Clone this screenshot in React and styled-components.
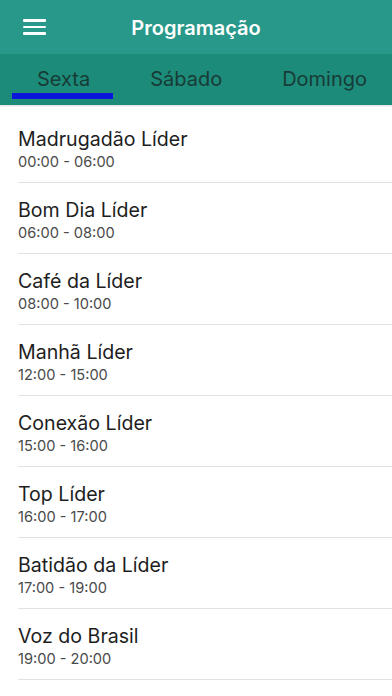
import React from "react";
import styled, { createGlobalStyle } from "styled-components";

const GlobalStyle = createGlobalStyle`
  body {
    margin: 0;
    background: #ffffff;
    font-family: Inter, "Liberation Sans", sans-serif;
  }
`;

const programs = [
  { title: "Madrugadão Líder", time: "00:00 - 06:00" },
  { title: "Bom Dia Líder", time: "06:00 - 08:00" },
  { title: "Café da Líder", time: "08:00 - 10:00" },
  { title: "Manhã Líder", time: "12:00 - 15:00" },
  { title: "Conexão Líder", time: "15:00 - 16:00" },
  { title: "Top Líder", time: "16:00 - 17:00" },
  { title: "Batidão da Líder", time: "17:00 - 19:00" },
  { title: "Voz do Brasil", time: "19:00 - 20:00" },
];

const tabs = ["Sexta", "Sábado", "Domingo"];

const App = () => {
  return (
    <Screen>
      <GlobalStyle />
      <Header>
        <MenuButton aria-label="menu">
          <span />
          <span />
          <span />
        </MenuButton>
        <Title>Programação</Title>
      </Header>
      <TabBar>
        {tabs.map((tab, i) => (
          <Tab key={tab} active={i === 0}>
            {tab}
          </Tab>
        ))}
      </TabBar>
      <List>
        {programs.map((p) => (
          <Row key={p.title}>
            <ProgramTitle>{p.title}</ProgramTitle>
            <ProgramTime>{p.time}</ProgramTime>
          </Row>
        ))}
      </List>
    </Screen>
  );
};

export default App;

// Styled Components
const Screen = styled.div`
  width: 392px;
  height: 696px;
  overflow: hidden;
  background: #fff;
`;

const Header = styled.header`
  height: 54px;
  background: #27988a;
  display: flex;
  align-items: center;
  justify-content: center;
  position: relative;
`;

const MenuButton = styled.div`
  position: absolute;
  left: 23px;
  top: 19px;
  width: 23px;
  display: flex;
  flex-direction: column;
  gap: 4px;

  span {
    display: block;
    height: 2.5px;
    background: #fff;
    border-radius: 1px;
  }
`;

const Title = styled.h1`
  margin: 0;
  color: #fff;
  font-size: 20px;
  font-weight: 600;
  padding-top: 2px;
`;

const TabBar = styled.nav`
  height: 51px;
  background: #1d8b7a;
  display: flex;
  justify-content: space-between;
  padding: 0 25px 0 37px;
  box-shadow: 0 1px 2px rgba(0, 0, 0, 0.15);
`;

const Tab = styled.div`
  position: relative;
  display: flex;
  align-items: center;
  padding-bottom: 2px;
  font-size: 20px;
  color: #17332f;
  opacity: 0.9;

  &::after {
    content: "";
    display: ${(p) => (p.active ? "block" : "none")};
    position: absolute;
    left: -25px;
    right: -23px;
    bottom: 6px;
    height: 6px;
    background: #0a0ae6;
  }
`;

const List = styled.div`
  padding-top: 7px;
`;

const Row = styled.div`
  margin-left: 18px;
  height: 71px;
  box-sizing: border-box;
  border-bottom: 1px solid #e2e2e2;
  padding-top: 15px;
  display: flex;
  flex-direction: column;
`;

const ProgramTitle = styled.div`
  font-size: 19.6px;
  line-height: 24px;
  color: #1e1e1e;
`;

const ProgramTime = styled.div`
  margin-top: 2px;
  font-size: 14.6px;
  line-height: 18px;
  color: #4a4a4a;
`;
